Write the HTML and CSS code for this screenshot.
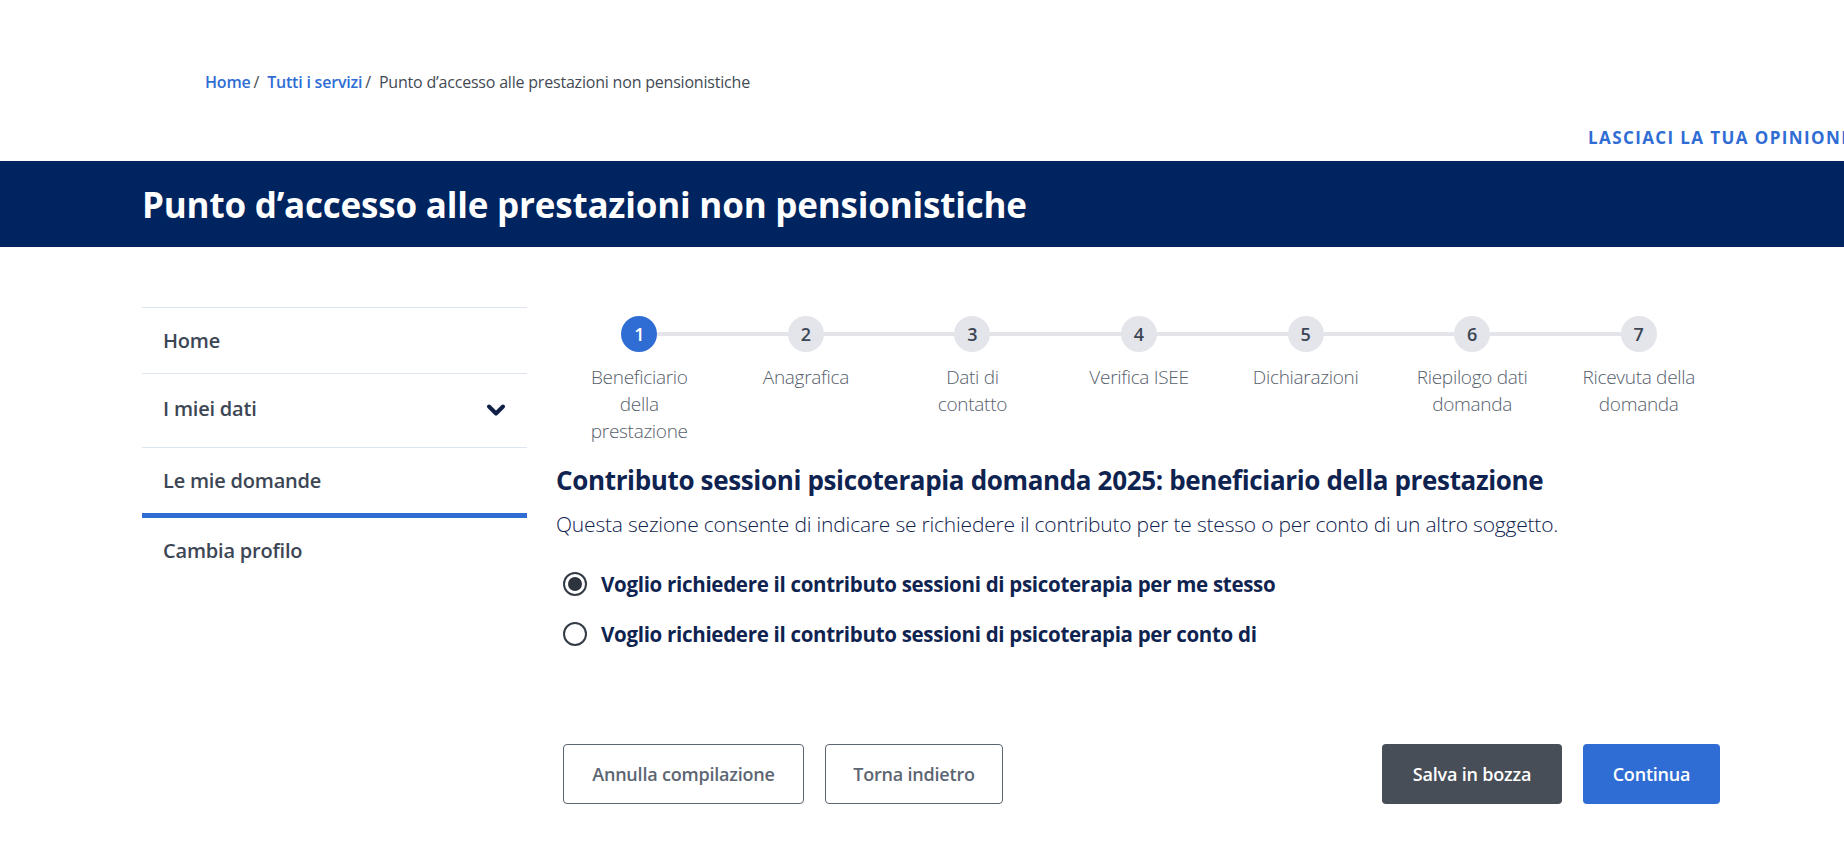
FILE: index.html
```html
<!DOCTYPE html>
<html lang="it">
<head>
    <meta charset="UTF-8">
    <meta name="viewport" content="width=device-width, initial-scale=1.0">
    <title>Punto d'accesso alle prestazioni non pensionistiche</title>
    <link rel="stylesheet" href="styles.css">
</head>
<body>
    <div class="page">
        <nav class="breadcrumb">
            <a href="#">Home</a><span class="sep">/</span>
            <a href="#">Tutti i servizi</a><span class="sep">/</span>
            <span class="current">Punto d’accesso alle prestazioni non pensionistiche</span>
        </nav>

        <div class="feedback">
            <a href="#">LASCIACI LA TUA OPINIONE</a>
        </div>

        <header class="banner">
            <h1>Punto d’accesso alle prestazioni non pensionistiche</h1>
        </header>

        <div class="layout">
            <aside class="sidenav">
                <ul>
                    <li><a href="#">Home</a></li>
                    <li class="has-sub">
                        <a href="#">I miei dati</a>
                        <svg class="chevron" width="20" height="14" viewBox="0 0 20 14">
                            <path d="M3 3.5 L10 10.5 L17 3.5" fill="none" stroke="#0e2045" stroke-width="4" stroke-linecap="round" stroke-linejoin="round"/>
                        </svg>
                    </li>
                    <li class="active"><a href="#">Le mie domande</a></li>
                    <li><a href="#">Cambia profilo</a></li>
                </ul>
            </aside>

            <main class="content">
                <ol class="stepper">
                    <li class="step current"><span class="dot">1</span><span class="label">Beneficiario della prestazione</span></li>
                    <li class="step"><span class="dot">2</span><span class="label">Anagrafica</span></li>
                    <li class="step"><span class="dot">3</span><span class="label">Dati di contatto</span></li>
                    <li class="step"><span class="dot">4</span><span class="label">Verifica ISEE</span></li>
                    <li class="step"><span class="dot">5</span><span class="label">Dichiarazioni</span></li>
                    <li class="step"><span class="dot">6</span><span class="label">Riepilogo dati domanda</span></li>
                    <li class="step"><span class="dot">7</span><span class="label">Ricevuta della domanda</span></li>
                </ol>

                <h2>Contributo sessioni psicoterapia domanda 2025: beneficiario della prestazione</h2>
                <p class="intro">Questa sezione consente di indicare se richiedere il contributo per te stesso o per conto di un altro soggetto.</p>

                <div class="choices">
                    <label class="choice">
                        <input type="radio" name="beneficiario" checked>
                        <span class="radio"></span>
                        Voglio richiedere il contributo sessioni di psicoterapia per me stesso
                    </label>
                    <label class="choice">
                        <input type="radio" name="beneficiario">
                        <span class="radio"></span>
                        Voglio richiedere il contributo sessioni di psicoterapia per conto di
                    </label>
                </div>

                <div class="actions">
                    <div class="group">
                        <button class="btn outline annulla">Annulla compilazione</button>
                        <button class="btn outline torna">Torna indietro</button>
                    </div>
                    <div class="group">
                        <button class="btn dark">Salva in bozza</button>
                        <button class="btn primary">Continua</button>
                    </div>
                </div>
            </main>
        </div>
    </div>
</body>
</html>
```

FILE: styles.css
```css
body {
    margin: 0;
    background-color: white;
    font-family: "Open Sans", Lato, sans-serif;
    color: #17324d;
}

.page {
    overflow: hidden;
    min-height: 856px;
}

a {
    text-decoration: none;
}

/* breadcrumb */
.breadcrumb {
    padding: 70px 0 0 205px;
    font-size: 16px;
    line-height: 24px;
    color: #434a54;
    letter-spacing: -0.2px;
}

.breadcrumb a {
    color: #2f6dd5;
    font-weight: 600;
}

.breadcrumb .sep {
    margin: 0 4px 0 3px;
}

/* feedback link */
.feedback {
    padding-left: 1588px;
    margin-top: 32px;
    line-height: 24px;
    white-space: nowrap;
}

.feedback a {
    color: #2f6dd5;
    font-weight: 700;
    font-size: 17px;
    letter-spacing: 1.4px;
}

/* banner */
.banner {
    margin-top: 11px;
    height: 86px;
    background-color: #00245f;
    display: flex;
    align-items: center;
    padding-left: 142px;
}

.banner h1 {
    margin: 0;
    color: white;
    font-size: 35px;
    font-weight: 700;
    letter-spacing: -0.2px;
}

/* layout */
.layout {
    display: flex;
    gap: 29px;
    padding-left: 142px;
    margin-top: 60px;
}

.sidenav {
    width: 385px;
    flex-shrink: 0;
}

.sidenav ul {
    list-style-type: none;
    margin: 0;
    padding: 0;
    border-top: 1px solid #dde5f0;
}

.sidenav li {
    display: flex;
    align-items: center;
    justify-content: space-between;
    padding: 21px 21px 20px 21px;
    border-bottom: 1px solid #dde5f0;
    line-height: 24px;
}

.sidenav li a {
    color: #3c4654;
    font-size: 20px;
    font-weight: 600;
    letter-spacing: -0.2px;
}

.sidenav li.has-sub {
    padding-top: 23px;
    padding-bottom: 26px;
}

.sidenav li.active {
    border-bottom: 5px solid #2f6dd5;
}

.sidenav li:last-child {
    border-bottom: none;
}

.chevron {
    margin: 2px 0 0 0;
}

/* main content */
.content {
    width: 1166px;
    padding-top: 9px;
}

.stepper {
    display: flex;
    list-style-type: none;
    margin: 0;
    padding: 0;
}

.step {
    flex: 1;
    position: relative;
    display: flex;
    flex-direction: column;
    align-items: center;
}

.step:not(:last-child)::after {
    content: "";
    position: absolute;
    top: 16px;
    left: 50%;
    width: 100%;
    height: 4px;
    background-color: #e4e5ea;
}

.dot {
    position: relative;
    z-index: 1;
    width: 36px;
    height: 36px;
    border-radius: 50%;
    background-color: #e4e5ea;
    color: #3c4654;
    font-size: 18px;
    font-weight: 600;
    display: flex;
    align-items: center;
    justify-content: center;
}

.step.current .dot {
    background-color: #2f6dd5;
    color: white;
}

.label {
    margin-top: 12px;
    max-width: 124px;
    text-align: center;
    font-size: 19px;
    font-weight: 300;
    line-height: 27px;
    color: #56606b;
    letter-spacing: -0.3px;
}

.content h2 {
    margin: 19px 0 0 0;
    font-size: 26px;
    line-height: 32px;
    font-weight: 700;
    color: #0f2350;
    letter-spacing: -0.35px;
}

.intro {
    margin: 14px 0 0 0;
    font-size: 21px;
    line-height: 28px;
    font-weight: 300;
    color: #0f2350;
    letter-spacing: -0.2px;
}

/* radios */
.choices {
    margin-top: 34px;
    padding-left: 7px;
    display: flex;
    flex-direction: column;
    gap: 26px;
}

.choice {
    display: flex;
    align-items: center;
    gap: 14px;
    font-size: 20.5px;
    font-weight: 700;
    color: #0f2350;
    line-height: 24px;
    letter-spacing: -0.3px;
}

.choice input {
    display: none;
}

.radio {
    width: 20px;
    height: 20px;
    border: 2px solid #333b45;
    border-radius: 50%;
    display: flex;
    align-items: center;
    justify-content: center;
}

.choice input:checked + .radio::after {
    content: "";
    width: 14px;
    height: 14px;
    border-radius: 50%;
    background-color: #2e343d;
}

/* buttons */
.actions {
    margin-top: 98px;
    padding: 0 2px 0 7px;
    display: flex;
    justify-content: space-between;
}

.group {
    display: flex;
    gap: 21px;
}

.btn {
    height: 60px;
    padding: 0;
    border-radius: 4px;
    font-family: "Open Sans", Lato, sans-serif;
    font-size: 18px;
    font-weight: 600;
    letter-spacing: -0.2px;
    cursor: pointer;
}

.btn.outline {
    background-color: white;
    border: 1px solid #5c6672;
    color: #5c6672;
}

.btn.annulla {
    width: 241px;
}

.btn.torna {
    width: 178px;
}

.btn.dark {
    background-color: #474e57;
    border: none;
    color: white;
    width: 180px;
}

.btn.primary {
    background-color: #2f6dd5;
    border: none;
    color: white;
    width: 137px;
}
```
